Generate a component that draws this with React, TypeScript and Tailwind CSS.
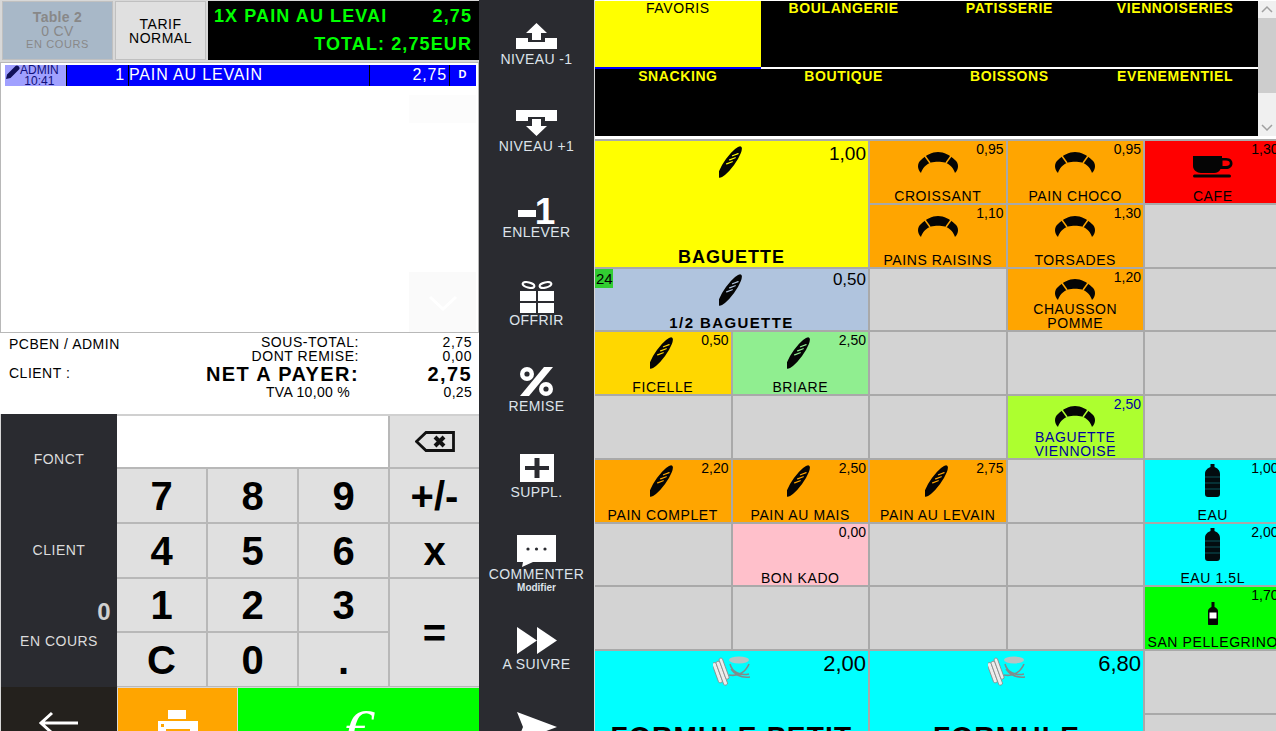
import { ReactNode } from "react";

function Bread({ cut }: { cut: string }) {
  return (
    <svg width="26" height="34" viewBox="0 0 26 34">
      <ellipse cx="11" cy="17" rx="5" ry="19" transform="rotate(36 11 17)" fill="#050505" />
      <g stroke={cut} strokeWidth="1.2" strokeLinecap="round">
        <path d="M7.6 18.9 L13.2 16.7" />
        <path d="M10.6 14.9 L16.2 12.7" />
        <path d="M13.5 10.8 L19.1 8.6" />
      </g>
    </svg>
  );
}

function Croissant({ cut }: { cut: string }) {
  return (
    <svg width="40" height="21" viewBox="0 0 40 21">
      <path
        d="M3 21 C-1 17 -1 11 3 8 C8 3 14 0 20 0 C26 0 32 3 37 8 C41 11 41 17 37 21 C36 17 32 12 27 10.5 C23 9.5 17 9.5 13 10.5 C8 12 4 17 3 21 Z"
        fill="#050505"
      />
      <g stroke={cut} strokeWidth="1.5">
        <path d="M12 11 L7 4" />
        <path d="M28 11 L33 4" />
      </g>
    </svg>
  );
}

function Cup() {
  return (
    <svg width="40" height="22" viewBox="0 0 40 22">
      <path
        d="M0 0 H29 V2 H33 C38 2 39.5 5 39.5 7.5 C39.5 11 36.5 13 33 13 H27.5 C26.5 15.5 24 17 21 17 H8 C4 17 0 14 0 10 Z M29.5 4.5 V10 H33 C35.5 10 36.8 9 36.8 7.2 C36.8 5.5 35.5 4.5 33 4.5 Z"
        fill="#050505"
        fillRule="evenodd"
      />
      <rect x="0" y="18.5" width="38" height="3" rx="1.5" fill="#050505" />
    </svg>
  );
}

function Bottle() {
  return (
    <svg width="15" height="33" viewBox="0 0 15 33">
      <path
        d="M5.5 0 H9.5 V3 C12 4 15 6 15 10 V30 C15 32 14 33 12 33 H3 C1 33 0 32 0 30 V10 C0 6 3 4 5.5 3 Z"
        fill="#030d10"
      />
      <g stroke="#0c6a70" strokeWidth="0.8">
        <path d="M0 13 H15" />
        <path d="M0 19 H15" />
        <path d="M0 25 H15" />
      </g>
    </svg>
  );
}

function WineBottle() {
  return (
    <svg width="10" height="23" viewBox="0 0 10 23">
      <path d="M3.5 0 H6.5 V5 C8.5 6 10 7 10 9 V22 C10 22.6 9.6 23 9 23 H1 C0.4 23 0 22.6 0 22 V9 C0 7 1.5 6 3.5 5 Z" fill="#050505" />
      <rect x="1.5" y="10.5" width="7" height="6" fill="#fff" />
    </svg>
  );
}

function Menu() {
  return (
    <svg width="38" height="31" viewBox="0 0 38 31">
      <ellipse cx="26" cy="4" rx="10" ry="3.4" fill="#b5c4c4" />
      <path d="M17 8 C19 16 27 20 36 18 M36 8 C33 15 26 21 16 19 M18 13 C23 20 29 22 37 21" stroke="#808c8c" strokeWidth="1.6" fill="none" />
      <g transform="rotate(-20 8 18)" stroke="#8a8a8a" strokeWidth="0.8" fill="#ececec">
        <rect x="3" y="5" width="4" height="21" rx="1.5" />
        <rect x="7" y="5" width="4" height="25" rx="1.5" />
        <rect x="11" y="3" width="3.5" height="22" rx="1.5" />
      </g>
    </svg>
  );
}

function NiveauUp() {
  return (
    <svg width="41" height="26" viewBox="0 0 41 26" fill="#fff">
      <path d="M0 15 H12 V19 H29 V15 H41 V26 H0 Z" />
      <path d="M20.5 0 L31 10 H25 V17 H16 V10 H10 Z" />
    </svg>
  );
}

function NiveauDown() {
  return (
    <svg width="41" height="26" viewBox="0 0 41 26" fill="#fff">
      <path d="M0 0 H41 V11 H29 V7 H12 V11 H0 Z" />
      <path d="M20.5 26 L31 16 H25 V9 H16 V16 H10 Z" />
    </svg>
  );
}

function Gift() {
  return (
    <svg width="34" height="32" viewBox="0 0 34 32" fill="#fff" className="mb-[-3px]">
      <ellipse cx="8.5" cy="4" rx="6" ry="2.6" fill="none" stroke="#fff" strokeWidth="2" transform="rotate(14 8.5 4)" />
      <ellipse cx="25.5" cy="4" rx="6" ry="2.6" fill="none" stroke="#fff" strokeWidth="2" transform="rotate(-14 25.5 4)" />
      <rect x="0" y="10" width="16" height="10" />
      <rect x="18" y="10" width="16" height="10" />
      <rect x="0" y="22" width="16" height="10" />
      <rect x="18" y="22" width="16" height="10" />
    </svg>
  );
}

function Percent() {
  return (
    <svg width="33" height="29" viewBox="0 0 33 29" fill="#fff">
      <path d="M24 0 H33 L9 29 H0 Z" />
      <circle cx="7" cy="7" r="7" />
      <circle cx="7" cy="7" r="2.6" fill="#2a2b30" />
      <circle cx="26" cy="22" r="7" />
      <circle cx="26" cy="22" r="2.6" fill="#2a2b30" />
    </svg>
  );
}

function PlusBox() {
  return (
    <svg width="34" height="28" viewBox="0 0 34 28">
      <rect width="34" height="28" fill="#fff" />
      <path d="M5 12 H14.5 V4 H19.5 V12 H29 V16 H19.5 V24 H14.5 V16 H5 Z" fill="#2a2b30" />
    </svg>
  );
}

function Comment() {
  return (
    <svg width="39" height="32" viewBox="0 0 39 32" className="mb-[-3px]">
      <path d="M0 0 H39 V27 H16 L5 32 L6 27 H0 Z" fill="#fff" />
      <circle cx="11" cy="14" r="1.6" fill="#2a2b30" />
      <circle cx="19.5" cy="14" r="1.6" fill="#2a2b30" />
      <circle cx="28" cy="14" r="1.6" fill="#2a2b30" />
    </svg>
  );
}

function Forward() {
  return (
    <svg width="40" height="27" viewBox="0 0 40 27" fill="#fff">
      <path d="M0 0 L20 13.5 L0 27 Z" />
      <path d="M20 0 L40 13.5 L20 27 Z" />
    </svg>
  );
}

function Send() {
  return (
    <svg width="40" height="30" viewBox="0 0 40 30" fill="#fff">
      <path d="M0 0 L40 15 L0 30 L6 15 Z" />
    </svg>
  );
}

function MinusOne() {
  return (
    <div className="flex h-[26px] items-start">
      <div className="mr-[-1px] mt-[14px] h-[7px] w-[18px] bg-white" />
      <span className="h-[26px] text-[37px] font-bold leading-[32px] text-white">1</span>
    </div>
  );
}

const sideButtons: { label: string; sub?: string; icon: ReactNode }[] = [
  { label: "NIVEAU -1", icon: <NiveauUp /> },
  { label: "NIVEAU +1", icon: <NiveauDown /> },
  { label: "ENLEVER", icon: <MinusOne /> },
  { label: "OFFRIR", icon: <Gift /> },
  { label: "REMISE", icon: <Percent /> },
  { label: "SUPPL.", icon: <PlusBox /> },
  { label: "COMMENTER", sub: "Modifier", icon: <Comment /> },
  { label: "A SUIVRE", icon: <Forward /> },
  { label: "", icon: <Send /> },
];

const tabs = [
  "FAVORIS",
  "BOULANGERIE",
  "PATISSERIE",
  "VIENNOISERIES",
  "SNACKING",
  "BOUTIQUE",
  "BOISSONS",
  "EVENEMENTIEL",
];

type Cell = {
  name?: string;
  price?: string;
  bg?: string;
  icon?: ReactNode;
  pad?: string;
  span?: string;
  nameClass?: string;
  priceClass?: string;
  badge?: string;
};

const ORANGE = "bg-[#ffa500]";
const EMPTY: Cell = {};
const big = "col-span-2 row-span-2";
const smallName = "mt-auto text-[14px] leading-[14px] tracking-[0.6px]";
const formulaName = "mt-[34px] text-[28px] leading-[32px] font-bold tracking-[1.25px]";

const cells: Cell[] = [
  { name: "BAGUETTE", price: "1,00", bg: "bg-[#ffff00]", span: big, icon: <Bread cut="#ffff00" />, pad: "pt-[4px]", nameClass: "mt-auto text-[18px] leading-[20px] font-bold tracking-[1px]", priceClass: "text-[19px] top-[3px]" },
  { name: "CROISSANT", price: "0,95", bg: ORANGE, icon: <Croissant cut="#ffa500" />, pad: "pt-[11px]" },
  { name: "PAIN CHOCO", price: "0,95", bg: ORANGE, icon: <Croissant cut="#ffa500" />, pad: "pt-[11px]" },
  { name: "CAFE", price: "1,30", bg: "bg-[#ff0000]", icon: <Cup />, pad: "pt-[15px]" },
  { name: "PAINS RAISINS", price: "1,10", bg: ORANGE, icon: <Croissant cut="#ffa500" />, pad: "pt-[11px]" },
  { name: "TORSADES", price: "1,30", bg: ORANGE, icon: <Croissant cut="#ffa500" />, pad: "pt-[11px]" },
  EMPTY,
  { name: "1/2 BAGUETTE", price: "0,50", bg: "bg-[#b0c4de]", span: "col-span-2", icon: <Bread cut="#b0c4de" />, pad: "pt-[4px]", nameClass: "mt-auto text-[15px] leading-[14px] font-bold tracking-[1.4px]", priceClass: "text-[17px] top-[2px]", badge: "24" },
  EMPTY,
  { name: "CHAUSSON\nPOMME", price: "1,20", bg: ORANGE, icon: <Croissant cut="#ffa500" />, pad: "pt-[10px]" },
  EMPTY,
  { name: "FICELLE", price: "0,50", bg: "bg-[#ffd700]", icon: <Bread cut="#ffd700" />, pad: "pt-[4px]" },
  { name: "BRIARE", price: "2,50", bg: "bg-[#90ee90]", icon: <Bread cut="#90ee90" />, pad: "pt-[4px]" },
  EMPTY,
  EMPTY,
  EMPTY,
  EMPTY,
  EMPTY,
  EMPTY,
  { name: "BAGUETTE\nVIENNOISE", price: "2,50", bg: "bg-[#adff2f]", icon: <Croissant cut="#adff2f" />, pad: "pt-[10px]", nameClass: `${smallName} text-[#0000a0]`, priceClass: "text-[14px] top-[1px] text-[#0000a0]" },
  EMPTY,
  { name: "PAIN COMPLET", price: "2,20", bg: ORANGE, icon: <Bread cut="#ffa500" />, pad: "pt-[4px]" },
  { name: "PAIN AU MAIS", price: "2,50", bg: ORANGE, icon: <Bread cut="#ffa500" />, pad: "pt-[4px]" },
  { name: "PAIN AU LEVAIN", price: "2,75", bg: ORANGE, icon: <Bread cut="#ffa500" />, pad: "pt-[4px]" },
  EMPTY,
  { name: "EAU", price: "1,00", bg: "bg-[#00ffff]", icon: <Bottle />, pad: "pt-[4px]" },
  EMPTY,
  { name: "BON KADO", price: "0,00", bg: "bg-[#ffc0cb]" },
  EMPTY,
  EMPTY,
  { name: "EAU 1.5L", price: "2,00", bg: "bg-[#00ffff]", icon: <Bottle />, pad: "pt-[4px]" },
  EMPTY,
  EMPTY,
  EMPTY,
  EMPTY,
  { name: "SAN PELLEGRINO", price: "1,70", bg: "bg-[#00ff00]", icon: <WineBottle />, pad: "pt-[15px]" },
  { name: "FORMULE PETIT", price: "2,00", bg: "bg-[#00ffff]", span: big, icon: <Menu />, pad: "pt-[5px]", nameClass: formulaName, priceClass: "text-[22px] top-[2px]" },
  { name: "FORMULE", price: "6,80", bg: "bg-[#00ffff]", span: big, icon: <Menu />, pad: "pt-[5px]", nameClass: formulaName, priceClass: "text-[22px] top-[2px]" },
  EMPTY,
  EMPTY,
];

function ProductCell({ cell }: { cell: Cell }) {
  if (!cell.name) return <div className="bg-[#d3d3d3]" />;
  return (
    <div className={`relative flex flex-col items-center overflow-hidden text-black ${cell.bg} ${cell.span ?? ""} ${cell.pad ?? ""}`}>
      {cell.icon}
      <div className={`text-center whitespace-pre ${cell.nameClass ?? smallName}`}>{cell.name}</div>
      <span className={`absolute right-[2px] leading-none ${cell.priceClass ?? "text-[14px] top-[1px]"}`}>
        {cell.price}
      </span>
      {cell.badge && (
        <span className="absolute left-0 top-0 w-[18px] bg-[#32cd32] px-[1px] text-[15px] leading-[19px]">
          {cell.badge}
        </span>
      )}
    </div>
  );
}

function TicketPanel() {
  return (
    <div className="relative mt-[2px] h-[271px] border border-[#b8b8b8] bg-white pl-[4px] pr-[2px] pt-[2px]">
      <div className="flex h-[21px] text-white">
        <div className="flex w-[61px] bg-[#a0a0ff] pl-[1px] text-[12px] leading-[11px] text-[#10107a]">
          <svg width="14" height="14" viewBox="0 0 14 14" className="shrink-0">
            <path d="M0 14 L1 9.5 L9.5 1 C10.3 0.2 11.5 0.2 12.3 1 L13 1.7 C13.8 2.5 13.8 3.7 13 4.5 L4.5 13 Z" fill="#10105a" />
          </svg>
          <div className="text-center">
            <div>ADMIN</div>
            <div>10:41</div>
          </div>
        </div>
        <div className="flex flex-1 border-l border-black bg-[#0000ff] text-[16px] leading-[19px] tracking-[0.85px]">
          <div className="w-[62px] border-r border-black pr-[3px] text-right">1</div>
          <div className="w-[241px] border-r border-black">PAIN AU LEVAIN</div>
          <div className="w-[80px] border-r border-black pr-[2px] text-right">2,75</div>
          <div className="flex-1 text-center text-[11px] font-bold">D</div>
        </div>
      </div>
      <div className="absolute right-[2px] top-[32px] h-[28px] w-[67px] bg-[#fcfcfc]" />
      <div className="absolute right-[2px] bottom-0 flex h-[60px] w-[67px] items-center justify-center bg-[#fafafa]">
        <svg width="30" height="16" viewBox="0 0 30 16" className="mt-[2px]">
          <path d="M2 2 L15 14 L28 2" stroke="#fff" strokeWidth="3" fill="none" />
        </svg>
      </div>
    </div>
  );
}

function SummaryPanel() {
  const rows = [
    { label: "SOUS-TOTAL:", value: "2,75", cls: "text-[14px] leading-[14px] tracking-[0.55px]" },
    { label: "DONT REMISE:", value: "0,00", cls: "text-[14px] leading-[14px] tracking-[0.55px]" },
    { label: "NET A PAYER:", value: "2,75", cls: "text-[20px] leading-[22px] font-bold tracking-[1.4px]" },
  ];
  return (
    <div className="flex h-[81px] bg-white pl-[9px] pr-[7px] pt-[2px] text-black">
      <div className="w-[140px] text-[14px] tracking-[0.5px]">
        <div className="mt-[2px] leading-[14px]">PCBEN / ADMIN</div>
        <div className="mt-[15px] leading-[14px]">CLIENT :</div>
      </div>
      <div className="flex-1">
        {rows.map((r) => (
          <div key={r.label} className={`flex justify-end ${r.cls}`}>
            <span>{r.label}</span>
            <span className="w-[113px] text-right">{r.value}</span>
          </div>
        ))}
        <div className="flex justify-end text-[14px] leading-[14px] tracking-[0.3px]">
          <span>TVA 10,00 %</span>
          <span className="w-[122px] text-right">0,25</span>
        </div>
      </div>
    </div>
  );
}

const keys = ["7", "8", "9", "+/-", "4", "5", "6", "x", "1", "2", "3"];

function Numpad() {
  const key = "flex items-center justify-center bg-[#e0e0e0] text-[40px] leading-none font-bold text-black";
  return (
    <div className="flex h-[273px]">
      <div className="ml-[1px] flex w-[116px] flex-col bg-[#2a2b30] text-[14px] tracking-[0.5px] text-[#dcdcdc]">
        <div className="flex h-[91px] items-center justify-center">FONCT</div>
        <div className="flex h-[91px] items-center justify-center">CLIENT</div>
        <div className="flex flex-1 flex-col items-center pt-[4px]">
          <span className="self-end pr-[6px] text-[24px] font-bold leading-[24px] text-[#d0d0d0]">0</span>
          <span className="mt-[5px] leading-[24px]">EN COURS</span>
        </div>
      </div>
      <div className="grid flex-1 grid-cols-4 grid-rows-[51px_53px_53px_52px_53px] gap-[2px] border-t-2 border-[#d0d0d0] bg-[#b8b8b8]">
        <div className="col-span-3 bg-white" />
        <div className="flex items-center justify-center bg-[#e0e0e0]">
          <svg width="40" height="21" viewBox="0 0 40 21">
            <path d="M11 1.5 H38.5 V19.5 H11 L1.5 10.5 Z" fill="none" stroke="#111" strokeWidth="2.8" />
            <path d="M20 6 L29 15 M29 6 L20 15" stroke="#111" strokeWidth="4" />
          </svg>
        </div>
        {keys.map((k) => (
          <button key={k} className={key}>
            {k}
          </button>
        ))}
        <button className={`${key} row-span-2`}>=</button>
        <button className={key}>C</button>
        <button className={key}>0</button>
        <button className={key}>.</button>
      </div>
    </div>
  );
}

function BottomBar() {
  return (
    <div className="flex h-[60px]">
      <div className="ml-[1px] flex w-[116px] justify-center bg-[#24211d] pt-[24px]">
        <svg width="42" height="24" viewBox="0 0 42 24">
          <path d="M40 12 H3 M14 2 L3 12 L14 22" stroke="#fff" strokeWidth="3" fill="none" />
        </svg>
      </div>
      <div className="ml-[1px] mt-[1px] flex w-[119px] justify-center bg-[#ffa500] pt-[22px]">
        <svg width="42" height="40" viewBox="0 0 42 40" fill="#fff">
          <rect x="11" y="0" width="18" height="9" />
          <path d="M1 11 H41 V40 H1 Z" />
          <rect x="9" y="19" width="24" height="21" fill="#ffa500" />
          <rect x="12" y="22" width="18" height="18" fill="#fff" />
          <rect x="4" y="14" width="3" height="3" fill="#ffa500" />
        </svg>
      </div>
      <div className="ml-[1px] mt-[1px] flex flex-1 justify-center bg-[#00ff00]">
        <span className="mt-[14px] text-[56px] italic leading-[56px] text-white [font-family:'Liberation_Serif',serif]">€</span>
      </div>
    </div>
  );
}

export default function App() {
  return (
    <div className="flex h-[731px] w-[1276px] overflow-hidden bg-[#d8d8d8] [font-family:'Liberation_Sans',Arial,sans-serif]">
      <div className="w-[479px] shrink-0">
        <div className="flex h-[60px] gap-[2px] pl-[2px] pt-[1px]">
          <div className="flex w-[111px] flex-col items-center justify-center border border-[#c0c0c0] bg-[#a8b8c8] text-[#888888]">
            <span className="text-[14px] font-bold leading-[14px] tracking-[0.3px]">Table 2</span>
            <span className="text-[14px] leading-[14px] tracking-[0.4px]">0 CV</span>
            <span className="text-[11px] leading-[13px] tracking-[0.6px]">EN COURS</span>
          </div>
          <div className="flex w-[91px] flex-col items-center justify-center border border-[#c0c0c0] bg-[#e0e0e0] text-[14px] leading-[14px] tracking-[0.5px] text-black">
            <span>TARIF</span>
            <span>NORMAL</span>
          </div>
          <div className="flex flex-1 flex-col bg-black pl-[6px] pr-[7px] pt-[5px] text-[18px] font-bold leading-[20px] tracking-[1.1px] text-[#00ff00]">
            <div className="flex justify-between">
              <span>1X PAIN AU LEVAI</span>
              <span>2,75</span>
            </div>
            <div className="mt-[8px] text-right">TOTAL: 2,75EUR</div>
          </div>
        </div>
        <TicketPanel />
        <SummaryPanel />
        <Numpad />
        <BottomBar />
      </div>

      <div className="grid w-[115px] shrink-0 auto-rows-[86.4px] bg-[#2a2b30] text-[#dde3ea]">
        {sideButtons.map((b, i) => (
          <div key={i} className="flex flex-col items-center justify-center pt-[4px]">
            {b.icon}
            <span className="mt-[3px] h-[15px] text-[14px] leading-[15px] tracking-[0.4px]">{b.label}</span>
            {b.sub && <span className="text-[10px] font-bold leading-[11px]">{b.sub}</span>}
          </div>
        ))}
      </div>

      <div className="ml-[1px] min-w-0 flex-1 overflow-hidden">
        <div className="flex h-[139px] bg-white pt-[1px]">
          <div className="grid h-[135px] flex-1 grid-cols-4 grid-rows-[68px_67px] bg-black">
            {tabs.map((t, i) => (
              <div
                key={t}
                className={`border-b-2 text-center text-[14px] leading-[14px] tracking-[0.6px] ${
                  i === 0
                    ? "border-[#0000ff] bg-[#ffff00] text-black"
                    : i < 4
                      ? "border-white font-bold text-[#ffff00]"
                      : "border-transparent font-bold text-[#ffff00]"
                }`}
              >
                {t}
              </div>
            ))}
          </div>
          <div className="flex h-[135px] w-[18px] flex-col bg-[#f0f0f0]">
            <svg width="18" height="17" viewBox="0 0 18 17">
              <path d="M4 11 L9 6 L14 11" stroke="#a0a0a0" strokeWidth="1.5" fill="none" />
            </svg>
            <div className="h-[75px] bg-[#cdcdcd]" />
            <svg width="18" height="17" viewBox="0 0 18 17" className="mt-auto">
              <path d="M4 6 L9 11 L14 6" stroke="#a0a0a0" strokeWidth="1.5" fill="none" />
            </svg>
          </div>
        </div>
        <div className="grid w-[686px] auto-rows-[61.75px] grid-cols-[repeat(5,135.5px)] gap-[2px] bg-[#a9a9a9] pt-[2px]">
          {cells.map((c, i) => (
            <ProductCell key={i} cell={c} />
          ))}
        </div>
      </div>
    </div>
  );
}
